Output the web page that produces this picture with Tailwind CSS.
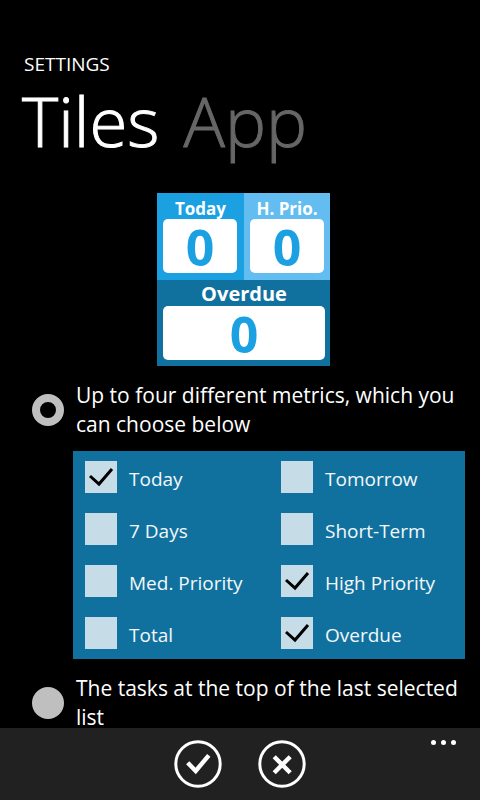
<!DOCTYPE html>
<html lang="en">
<head>
<meta charset="utf-8">
<meta name="viewport" content="width=device-width, initial-scale=1">
<title>Settings</title>
<script src="https://cdn.jsdelivr.net/npm/@tailwindcss/browser@4"></script>
</head>
<body class="bg-black text-white font-['Open_Sans','Noto_Sans',sans-serif]">
<div class="flex h-screen flex-col overflow-hidden">
  <main class="min-h-0 flex-1 overflow-hidden">
    <header class="px-6 pt-[50px]">
      <p class="text-[19px] leading-7">SETTINGS</p>
      <nav class="-ml-0.5 flex gap-6 text-[69px] leading-[84px] font-light [-webkit-text-stroke:1px_currentColor]" aria-label="Sections">
        <a href="#tiles" aria-current="page">Tiles</a>
        <a href="#app" class="text-[#666666]">App</a>
      </nav>
    </header>

    <div class="mt-[31px] flex justify-center pr-4 pl-[23px]">
      <section class="grid w-[173px] grid-cols-[87px_86px] text-center font-bold" aria-label="Tile preview">
        <div class="h-[87px] bg-[#1ba1e2] px-[6px] pt-[5px]">
          <h2 class="text-[17px] leading-[21px]">Today</h2>
          <p class="h-[54px] w-[74px] rounded-[5px] bg-white text-[50px] leading-[56px] text-[#1ba1e2]">0</p>
        </div>
        <div class="h-[87px] bg-[#63bdf0] px-[6px] pt-[5px]">
          <h2 class="text-[17px] leading-[21px] whitespace-nowrap">H. Prio.</h2>
          <p class="h-[54px] w-[74px] rounded-[5px] bg-white text-[50px] leading-[56px] text-[#1ba1e2]">0</p>
        </div>
        <div class="col-span-2 h-[86px] bg-[#11719e] pr-[5px] pl-[6px]">
          <h2 class="pt-0.5 text-[20px] leading-6">Overdue</h2>
          <p class="h-[54px] rounded-[5px] bg-white text-[50px] leading-[56px] text-[#1ba1e2]">0</p>
        </div>
      </section>
    </div>

    <form class="mt-[15px] pr-[15px] pl-8">
      <label class="flex items-center gap-3 text-[21px] leading-[29px]">
        <input type="radio" name="mode" checked class="size-8 shrink-0 appearance-none rounded-full bg-[#bfbfbf] checked:border-8 checked:border-[#bfbfbf] checked:bg-black">
        <span>Up to four different metrics, which you can choose below</span>
      </label>
      <fieldset class="mt-3 ml-[41px] grid grid-cols-2 bg-[#11719e] text-[19px] text-[#f3f8fa]" aria-label="Metrics">
        <label class="flex h-[52px] items-center gap-3 pl-3"><span class="grid"><input type="checkbox" checked class="peer col-start-1 row-start-1 size-8 appearance-none bg-[#c6dce6]"><svg class="pointer-events-none invisible col-start-1 row-start-1 size-8 peer-checked:visible" viewBox="0 0 32 32" fill="none" stroke="#000" stroke-width="3"><path d="M5 15l9 8L27 8"/></svg></span><span class="pt-1">Today</span></label>
        <label class="flex h-[52px] items-center gap-3 pl-3"><input type="checkbox" class="size-8 appearance-none bg-[#c6dce6]"><span class="pt-1">Tomorrow</span></label>
        <label class="flex h-[52px] items-center gap-3 pl-3"><input type="checkbox" class="size-8 appearance-none bg-[#c6dce6]"><span class="pt-1">7 Days</span></label>
        <label class="flex h-[52px] items-center gap-3 pl-3"><input type="checkbox" class="size-8 appearance-none bg-[#c6dce6]"><span class="pt-1">Short-Term</span></label>
        <label class="flex h-[52px] items-center gap-3 pl-3"><input type="checkbox" class="size-8 appearance-none bg-[#c6dce6]"><span class="pt-1">Med. Priority</span></label>
        <label class="flex h-[52px] items-center gap-3 pl-3"><span class="grid"><input type="checkbox" checked class="peer col-start-1 row-start-1 size-8 appearance-none bg-[#c6dce6]"><svg class="pointer-events-none invisible col-start-1 row-start-1 size-8 peer-checked:visible" viewBox="0 0 32 32" fill="none" stroke="#000" stroke-width="3"><path d="M5 15l9 8L27 8"/></svg></span><span class="pt-1">High Priority</span></label>
        <label class="flex h-[52px] items-center gap-3 pl-3"><input type="checkbox" class="size-8 appearance-none bg-[#c6dce6]"><span class="pt-1">Total</span></label>
        <label class="flex h-[52px] items-center gap-3 pl-3"><span class="grid"><input type="checkbox" checked class="peer col-start-1 row-start-1 size-8 appearance-none bg-[#c6dce6]"><svg class="pointer-events-none invisible col-start-1 row-start-1 size-8 peer-checked:visible" viewBox="0 0 32 32" fill="none" stroke="#000" stroke-width="3"><path d="M5 15l9 8L27 8"/></svg></span><span class="pt-1">Overdue</span></label>
      </fieldset>
      <label class="mt-[15px] flex items-center gap-3 text-[21px] leading-[29px]">
        <input type="radio" name="mode" class="size-8 shrink-0 appearance-none rounded-full bg-[#bfbfbf] checked:border-8 checked:border-[#bfbfbf] checked:bg-black">
        <span>The tasks at the top of the last selected list</span>
      </label>
    </form>
  </main>

  <footer class="grid h-[72px] shrink-0 grid-cols-[1fr_auto_1fr] bg-[#212121]">
    <div class="col-start-2 flex items-center gap-9">
      <button type="button" aria-label="Save" class="size-12">
        <svg class="size-12" viewBox="0 0 48 48" fill="none" stroke="#fff"><circle cx="24" cy="24" r="22.2" stroke-width="3"/><path d="M13.7 22.7l8 8.3L34.8 15.3" stroke-width="4.4"/></svg>
      </button>
      <button type="button" aria-label="Cancel" class="size-12">
        <svg class="size-12" viewBox="0 0 48 48" fill="none" stroke="#fff"><circle cx="24" cy="24" r="22.2" stroke-width="3"/><path d="M16.2 16.7l16 16M32.2 16.7l-16 16" stroke-width="4.4"/></svg>
      </button>
    </div>
    <button type="button" aria-label="More" class="mt-3 mr-6 self-start justify-self-end">
      <svg class="block h-[5px] w-[25px]" viewBox="0 0 25 5" fill="#fff"><circle cx="2.5" cy="2.5" r="2.5"/><circle cx="12.5" cy="2.5" r="2.5"/><circle cx="22.5" cy="2.5" r="2.5"/></svg>
    </button>
  </footer>
</div>
</body>
</html>
